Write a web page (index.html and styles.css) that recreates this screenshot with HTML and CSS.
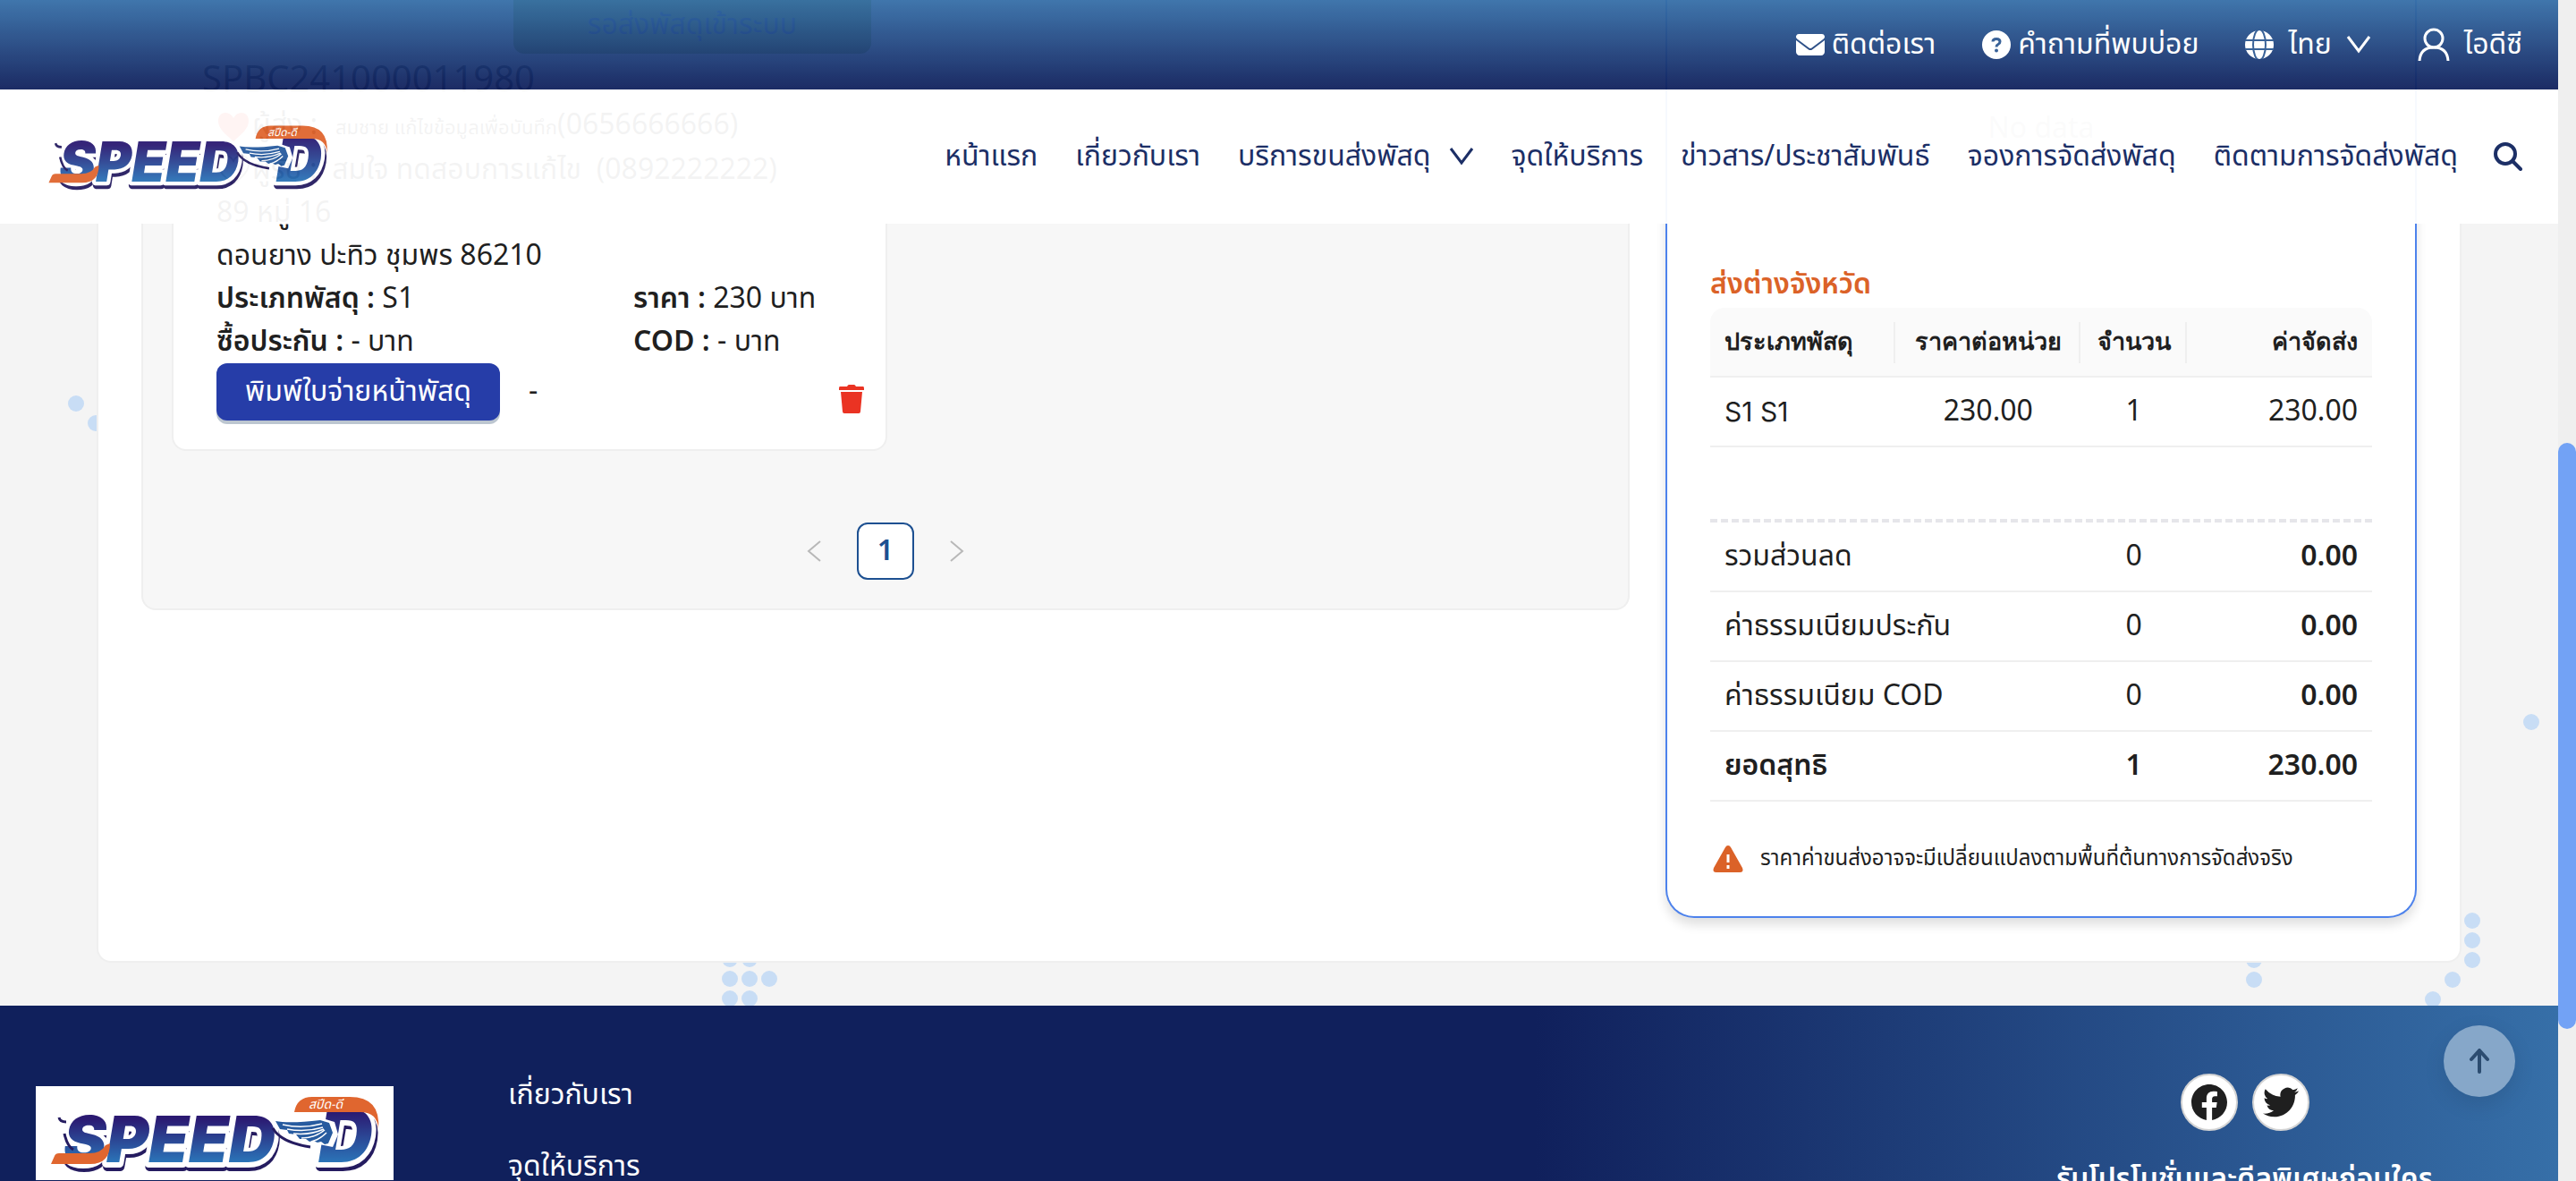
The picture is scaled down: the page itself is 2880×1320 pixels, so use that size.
FILE: index.html
```html
<!DOCTYPE html>
<html lang="th">
<head>
<meta charset="utf-8">
<meta name="viewport" content="width=device-width, initial-scale=1">
<title>Speed-D</title>
<link rel="stylesheet" href="styles.css">
</head>
<body>
<svg class="defs" width="0" height="0" aria-hidden="true">
  <defs>
    <linearGradient id="ink" x1="0" y1="0" x2="0" y2="1">
      <stop offset="0.25" stop-color="#2b1a72"/><stop offset="0.8" stop-color="#2b74b8"/>
    </linearGradient>
    <symbol id="logo" viewBox="0 0 400 105">
      <rect width="400" height="105" fill="#fff"/>
      <g class="logo-word" font-size="72">
        <text x="32" y="90" fill="#251c60" stroke="#251c60" stroke-width="10">SPEED</text>
        <text x="318" y="90" font-size="84" fill="#251c60" stroke="#251c60" stroke-width="10">D</text>
        <text x="31" y="86" fill="#fff" stroke="#fff" stroke-width="10">SPEED</text>
        <text x="316" y="86" font-size="84" fill="#fff" stroke="#fff" stroke-width="10">D</text>
        <text x="31" y="85" fill="url(#ink)">SPEED</text>
        <text x="316" y="85" font-size="84" fill="url(#ink)">D</text>
      </g>
      <path d="M17 87l4-9q1-3 5-3h34q13 0 18-9l5-2q0 23-22 23z" fill="#e0662f"/>
      <path d="M289 29q3-17 20-17h42q35 0 32 36-1-19-20-19z" fill="#e0662f"/>
      <path d="M264 35q8 28 48 29l20 4 6-14-4-14-10-3q-20 2-60-2z" fill="#fff"/>
      <path d="M268 39q16 3 50-1l10 3 4 11-5 12-4 1-4-3-4 1-5-2-4 1-4-3-7 0-4-5-8-1-2-4-8-1z" fill="#275b9f"/>
      <path d="M276 43q22 5 44-1M281 48q20 4 40-2M288 53q18 2 34-5M297 58q15 0 26-9M308 62q9-2 17-10" fill="none" stroke="#fff" stroke-width="1.500"/>
      <path d="M265 47q9 16 42 21" fill="none" stroke="#251c60" stroke-width="3"/>
      <path d="M26 35q1 5 8 5M32 53q3 14 10 18" fill="none" stroke="#251c60" stroke-width="3"/>
      <text class="logo-tag" x="305" y="25" font-size="14" fill="#fff">สปีด-ดี</text>
    </symbol>
    <symbol id="down" viewBox="0 0 28 20"><path d="M2 1l12 16L26 1" fill="none" stroke="currentColor" stroke-width="3"/></symbol>
    <symbol id="heart" viewBox="0 0 38 36"><path d="M19 34C10 26 2 20 2 11 2 5 6 2 10 2c4 0 7 2 9 6 2-4 5-6 9-6 4 0 8 3 8 9 0 9-8 15-17 23z"/></symbol>
  </defs>
</svg>

<header class="site-header">
  <div class="topbar">
    <a href="#" class="tool"><svg width="32" height="32" viewBox="0 0 512 512" fill="currentColor"><path d="M48 64a48 48 0 0 0-29 86l218 164c11 8 27 8 38 0l218-164a48 48 0 0 0-29-86zM0 176v208c0 35 29 64 64 64h384c35 0 64-29 64-64V176L294 339a64 64 0 0 1-76 0z"/></svg>ติดต่อเรา</a>
    <a href="#" class="tool"><svg width="32" height="32" viewBox="0 0 32 32"><circle cx="16" cy="16" r="16" fill="currentColor"/><path d="M12 12.500q0-3 4-3t4 3q0 2-2 3t-2 3" fill="none" stroke="#2f5a93" stroke-width="3"/><circle cx="16" cy="22.500" r="2" fill="#2f5a93"/></svg>คำถามที่พบบ่อย</a>
    <button type="button" class="tool lang"><svg width="32" height="32" viewBox="0 0 32 32"><circle cx="16" cy="16" r="16" fill="currentColor"/><g fill="none" stroke="#2f5a93" stroke-width="2"><ellipse cx="16" cy="16" rx="7" ry="17"/><path d="M0 11h32M0 21h32"/></g></svg><span>ไทย</span><svg width="28" height="20"><use href="#down"/></svg></button>
    <button type="button" class="tool user"><svg width="36" height="38" viewBox="0 0 36 38" fill="none" stroke="currentColor" stroke-width="3"><circle cx="18" cy="12" r="10"/><path d="M2 37q1-15 16-15t16 15"/></svg>ไอดีซี</button>
  </div>
  <nav class="navbar">
    <a href="#" class="brand" aria-label="Speed-D"><svg width="340" height="90"><use href="#logo"/></svg></a>
    <ul class="menu">
      <li><a href="#">หน้าแรก</a></li>
      <li><a href="#">เกี่ยวกับเรา</a></li>
      <li><a href="#">บริการขนส่งพัสดุ<svg width="28" height="20"><use href="#down"/></svg></a></li>
      <li><a href="#">จุดให้บริการ</a></li>
      <li><a href="#">ข่าวสาร/ประชาสัมพันธ์</a></li>
      <li><a href="#">จองการจัดส่งพัสดุ</a></li>
      <li><a href="#">ติดตามการจัดส่งพัสดุ</a></li>
    </ul>
    <button type="button" class="search" aria-label="ค้นหา"><svg width="32" height="32" viewBox="0 0 32 32" fill="none" stroke="currentColor" stroke-width="4"><circle cx="13" cy="13" r="11"/><path d="M21 21l9 9" stroke-linecap="round"/></svg></button>
  </nav>
</header>

<main class="page">
  <svg class="dots dots-left" width="116" height="490" fill="#c8ddf5"><circle cx="85" cy="451" r="9"/><circle cx="107" cy="473" r="9"/></svg>
  <svg class="dots dots-middle" width="64" height="66" fill="#c8ddf5"><circle cx="10" cy="14" r="9"/><circle cx="32" cy="14" r="9"/><circle cx="10" cy="36" r="9"/><circle cx="32" cy="36" r="9"/><circle cx="54" cy="36" r="9"/><circle cx="10" cy="58" r="9"/><circle cx="32" cy="58" r="9"/></svg>
  <svg class="dots dots-right" width="350" height="342" fill="#c8ddf5"><circle cx="320" cy="25" r="9"/><circle cx="254" cy="247" r="9"/><circle cx="254" cy="269" r="9"/><circle cx="254" cy="291" r="9"/><circle cx="232" cy="313" r="9"/><circle cx="210" cy="335" r="9"/><circle cx="10" cy="291" r="9"/><circle cx="10" cy="313" r="9"/></svg>

  <div class="sheet">
    <section class="parcels">
      <article class="parcel">
        <div class="status">รอส่งพัสดุเข้าระบบ</div>
        <div class="code">SPBC241000011980</div>
        <div class="party"><svg class="saved" width="38" height="36"><use href="#heart"/></svg><span>ผู้ส่ง : <small>&nbsp; สมชาย แก้ไขข้อมูลเพื่อบันทึก</small>(0656666666)</span></div>
        <div class="party"><svg class="unsaved" width="38" height="36"><use href="#heart"/></svg><span>ผู้รับ : &nbsp;สมใจ ทดสอบการแก้ไข &nbsp;(0892222222)</span></div>
        <div class="line">89 หมู่ 16</div>
        <div class="line">ดอนยาง ปะทิว ชุมพร 86210</div>
        <div class="facts">
          <div><b>ประเภทพัสดุ :</b> S1</div>
          <div><b>ราคา :</b> 230 บาท</div>
          <div><b>ซื้อประกัน :</b> - บาท</div>
          <div><b>COD :</b> - บาท</div>
        </div>
        <div class="actions">
          <button type="button" class="print">พิมพ์ใบจ่ายหน้าพัสดุ</button>
          <span>-</span>
          <button type="button" class="remove" aria-label="ลบ"><svg width="28" height="32" viewBox="0 0 28 32" fill="#ea3323"><path d="M9 2q1-2 2-2h6q1 0 2 2h8q1 0 1 2v2H0V4q0-2 1-2zM2 8h24l-2 22q0 2-2 2H6q-2 0-2-2z"/></svg></button>
        </div>
      </article>
      <nav class="pager" aria-label="หน้า">
        <button type="button" aria-label="ก่อนหน้า"><svg width="16" height="24" viewBox="0 0 16 24"><path d="M15 1L2 12l13 11"/></svg></button>
        <button type="button" class="current">1</button>
        <button type="button" aria-label="ถัดไป"><svg width="16" height="24" viewBox="0 0 16 24"><path d="M1 1l13 11L1 23"/></svg></button>
      </nav>
    </section>

    <aside class="summary">
      <div class="empty">No data</div>
      <h2>ส่งต่างจังหวัด</h2>
      <table>
        <colgroup><col class="c-type"><col class="c-price"><col class="c-count"><col></colgroup>
        <thead><tr><th>ประเภทพัสดุ</th><th>ราคาต่อหน่วย</th><th>จำนวน</th><th>ค่าจัดส่ง</th></tr></thead>
        <tbody><tr><td class="latin">S1 S1</td><td>230.00</td><td>1</td><td>230.00</td></tr></tbody>
      </table>
      <table class="totals">
        <colgroup><col class="c-type"><col class="c-price"><col class="c-count"><col></colgroup>
        <tbody>
          <tr><td colspan="2">รวมส่วนลด</td><td>0</td><td><b>0.00</b></td></tr>
          <tr><td colspan="2">ค่าธรรมเนียมประกัน</td><td>0</td><td><b>0.00</b></td></tr>
          <tr><td colspan="2">ค่าธรรมเนียม COD</td><td>0</td><td><b>0.00</b></td></tr>
          <tr class="net"><td colspan="2">ยอดสุทธิ</td><td>1</td><td>230.00</td></tr>
        </tbody>
      </table>
      <p class="notice"><svg width="40" height="32" viewBox="0 0 40 32"><path d="M20 1q2 0 3 2l13 23q2 5-3 5H7q-5 0-3-5L17 3q1-2 3-2z" fill="#db6228"/><path d="M20 11v9M20 23v4" stroke="#fff" stroke-width="3"/></svg>ราคาค่าขนส่งอาจจะมีเปลี่ยนแปลงตามพื้นที่ต้นทางการจัดส่งจริง</p>
    </aside>
  </div>
</main>

<footer class="footer">
  <svg class="footer-logo" width="400" height="105"><use href="#logo"/></svg>
  <ul class="links">
    <li><a href="#">เกี่ยวกับเรา</a></li>
    <li><a href="#">จุดให้บริการ</a></li>
  </ul>
  <div class="follow">
    <div class="social">
      <a href="#" aria-label="Facebook"><svg width="40" height="40" viewBox="0 0 24 24" fill="#1f1f1f"><path d="M24 12.070C24 5.400 18.630 0 12 0S0 5.400 0 12.070C0 18.100 4.390 23.090 10.130 24v-8.440H7.080v-3.490h3.050V9.410c0-3.020 1.790-4.690 4.530-4.690 1.310 0 2.690.24 2.690.24v2.970h-1.520c-1.490 0-1.960.93-1.960 1.890v2.250h3.330l-.53 3.490h-2.800V24C19.610 23.090 24 18.100 24 12.070z"/></svg></a>
      <a href="#" aria-label="Twitter"><svg width="40" height="40" viewBox="0 0 24 24" fill="#1f1f1f"><path d="M23.950 4.570a10 10 0 0 1-2.820.77 4.960 4.960 0 0 0 2.160-2.720 9.900 9.900 0 0 1-3.120 1.190 4.920 4.920 0 0 0-8.390 4.480A13.930 13.930 0 0 1 1.640 3.160a4.920 4.920 0 0 0 1.520 6.570 4.900 4.900 0 0 1-2.230-.61v.06a4.920 4.920 0 0 0 3.950 4.830 4.990 4.990 0 0 1-2.210.08 4.940 4.940 0 0 0 4.600 3.420A9.870 9.870 0 0 1 0 19.540a13.990 13.990 0 0 0 7.550 2.210c9.050 0 14-7.500 14-13.990 0-.21 0-.42-.02-.63a9.940 9.940 0 0 0 2.460-2.550z"/></svg></a>
    </div>
    <p>รับโปรโมชั่นและดีลพิเศษก่อนใคร</p>
  </div>
  <button type="button" class="to-top" aria-label="กลับขึ้นด้านบน"><svg width="24" height="28" viewBox="0 0 24 28" fill="none" stroke="#2c4c70" stroke-width="4" stroke-linecap="round" stroke-linejoin="round"><path d="M12 26V3M3 12l9-10 9 10"/></svg></button>
</footer>
<div class="scroll-track"><div class="scroll-thumb"></div></div>
</body>
</html>
```
FILE: styles.css
```css
* { box-sizing: border-box; }

body {
  margin: 0;
  padding-right: 20px;
  height: 100vh;
  overflow: hidden;
  background: #f4f4f4;
  color: #1f1f1f;
  font: 32px/48px "Noto Sans Thai", "Noto Sans", sans-serif;
}

b { font-weight: 600; }
a { color: inherit; text-decoration: none; }
ul { list-style: none; margin: 0; padding: 0; }
svg { display: block; flex: none; }
button {
  border: 0;
  padding: 0;
  background: none;
  color: inherit;
  font: inherit;
  cursor: pointer;
}
.defs { position: absolute; }

/* Header */
.site-header {
  position: fixed;
  inset: 0 20px auto 0;
  z-index: 5;
  opacity: 0.95;
}
.topbar {
  display: flex;
  justify-content: flex-end;
  align-items: center;
  gap: 52px;
  height: 100px;
  padding-right: 40px;
  background: linear-gradient(#366fa8, #10205c);
  color: #fff;
}
.tool { display: flex; align-items: center; gap: 8px; }
.tool.lang { gap: 16px; }
.tool.user { gap: 16px; }
.navbar {
  display: flex;
  align-items: center;
  gap: 40px;
  height: 150px;
  padding: 0 40px;
  background: #fff;
  color: #10245e;
}
.brand { margin-right: auto; }
.menu { display: flex; gap: 42px; }
.menu a { display: flex; align-items: center; gap: 20px; white-space: nowrap; }

.logo-word {
  font-family: Inter, sans-serif;
  font-weight: 900;
  font-style: italic;
  stroke-linejoin: round;
}
.logo-tag { font-family: "Noto Sans Thai", "Noto Sans", sans-serif; font-style: italic; }

/* Page */
.page { position: relative; padding: 0 108px 48px; }
.dots { position: absolute; }
.dots-left { left: 0; top: 0; }
.dots-middle { left: 806px; bottom: 0; }
.dots-right { right: 0; bottom: 0; }

.sheet {
  position: relative;
  display: grid;
  grid-template-columns: minmax(0, 1664fr) minmax(0, 840fr);
  align-items: start;
  gap: 40px;
  padding: 0 48px 48px;
  background: #fff;
  border: 2px solid #efefef;
  border-top: 0;
  border-radius: 0 0 16px 16px;
}

.parcels {
  padding: 0 32px 32px;
  background: #f7f7f7;
  border: 2px solid #efefef;
  border-top: 0;
  border-radius: 0 0 16px 16px;
}
.parcel {
  width: calc(50% + 2px);
  padding: 0 16px 32px 48px;
  background: #fff;
  border: 2px solid #efefef;
  border-top: 0;
  border-radius: 0 0 16px 16px;
}
.status {
  width: 400px;
  height: 60px;
  margin-left: auto;
  padding-top: 4px;
  border-radius: 0 0 12px 12px;
  background: #6f9a10;
  color: #101a90;
  text-align: center;
}
.code { margin-left: -16px; padding-top: 2px; font-size: 40px; line-height: 56px; }
.party { display: flex; align-items: center; gap: 2px; height: 48px; white-space: nowrap; }
.party small { font-size: 22px; }
.saved { fill: #ff2a1c; }
.unsaved { fill: none; stroke: #555; stroke-width: 2; }
.facts { display: grid; grid-template-columns: 466px 1fr; }
.actions { display: flex; align-items: center; gap: 32px; }
.actions .remove { margin: 16px 8px 0 auto; }
.print {
  height: 64px;
  padding: 0 32px;
  border-radius: 12px;
  background: #263da8;
  box-shadow: 0 4px 0 #bcc6d0;
  color: #fff;
}

.pager {
  display: flex;
  justify-content: center;
  align-items: center;
  gap: 40px;
  padding-top: 80px;
}
.pager path { fill: none; stroke: #b8b8b8; stroke-width: 2; }
.pager .current {
  width: 64px;
  height: 64px;
  border: 2px solid #1d5091;
  border-radius: 12px;
  background: #fff;
  color: #1d5091;
  font-weight: 600;
}

/* Price summary */
.summary {
  padding: 120px 48px 40px;
  border: 2px solid #4d82ec;
  border-top: 0;
  border-radius: 0 0 32px 32px;
  background: #fff;
  box-shadow: 0 8px 12px rgba(0, 0, 0, 0.12);
}
.empty { height: 174px; color: #aaa; text-align: center; }
.summary h2 {
  margin: 0;
  padding-bottom: 2px;
  color: #db6228;
  font-size: 32px;
  font-weight: 600;
}
.summary table {
  width: 100%;
  table-layout: fixed;
  border-collapse: separate;
  border-spacing: 0;
}
.c-type, .c-price { width: 28%; }
.c-count { width: 16%; }
.summary th, .summary td {
  height: 78px;
  padding: 0 16px;
  border-bottom: 2px solid #efefef;
  text-align: center;
}
.summary th {
  position: relative;
  padding: 0 8px;
  background: #fafafa;
  font: bold 27px/48px "Liberation Serif", serif;
}
.summary th:first-child { padding-left: 16px; }
.summary th:last-child { padding-right: 16px; }
.summary th:not(:last-child)::after {
  content: "";
  position: absolute;
  top: 16px;
  right: 0;
  width: 2px;
  height: 46px;
  background: #efefef;
}
.summary tr > :first-child { text-align: left; }
.summary tr > :last-child { text-align: right; }
.summary th:first-child { border-top-left-radius: 16px; }
.summary th:last-child { border-top-right-radius: 16px; }
.summary .latin { font-family: Inter, sans-serif; font-size: 30px; }
.summary .totals { margin-top: 80px; border-top: 4px dashed #e6e6ea; }
.net { font-weight: 600; }
.notice {
  display: flex;
  align-items: center;
  gap: 16px;
  margin: 40px 0 0;
  font-size: 24px;
  white-space: nowrap;
}

/* Footer */
.footer {
  position: relative;
  display: flex;
  align-items: flex-start;
  padding: 76px 140px 0 40px;
  background: linear-gradient(90deg, #10205c 60%, #366fa8);
  color: #fff;
}
.footer-logo { margin-top: 14px; }
.links { display: grid; gap: 32px; margin-left: 128px; }
.follow { margin-left: auto; text-align: center; }
.follow p { margin: 30px 0 0; font-size: 32px; font-weight: 600; }
.social { display: flex; justify-content: center; gap: 16px; }
.social a {
  display: grid;
  place-items: center;
  width: 64px;
  height: 64px;
  border: 2px solid #d4d4d4;
  border-radius: 50%;
  background: #fff;
}
.to-top {
  position: absolute;
  top: 22px;
  right: 48px;
  display: grid;
  place-items: center;
  width: 80px;
  height: 80px;
  border-radius: 50%;
  background: #86a7c9;
  box-shadow: 0 8px 24px rgba(0, 0, 0, 0.1);
}

.scroll-track {
  position: fixed;
  inset: 0 0 0 auto;
  width: 20px;
  padding-top: 495px;
  background: #efefef;
}
.scroll-thumb { height: 655px; border-radius: 10px; background: #72a2f5; }
```
